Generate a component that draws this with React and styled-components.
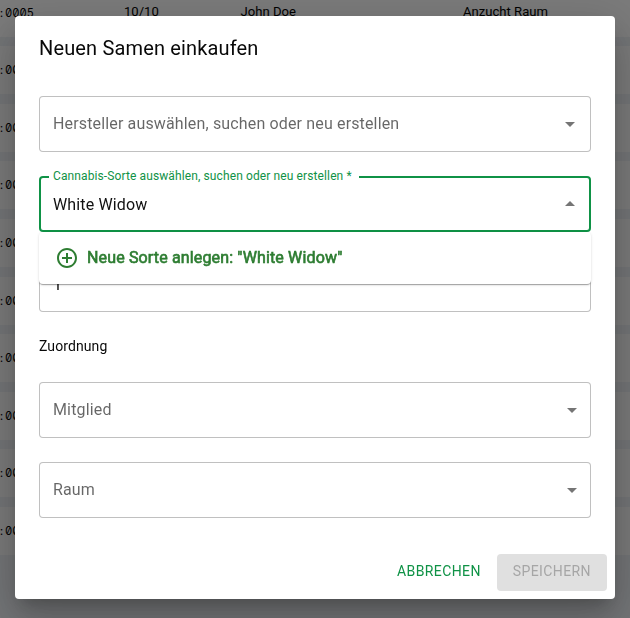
import React from "react";
import styled, { createGlobalStyle } from "styled-components";

const GlobalStyle = createGlobalStyle`
  * { box-sizing: border-box; }
  html, body { margin: 0; height: 100%; overflow: hidden; }
  body {
    background: #e8ebef;
    color: rgba(0, 0, 0, 0.87);
    font-family: Roboto, "Liberation Sans", sans-serif;
    font-size: 14px;
  }
`;

const Page = styled.div`
  height: 618px;
  overflow: hidden;
`;

const SeedList = styled.div`
  display: flex;
  flex-direction: column;
  gap: 9.6px;
  margin-top: -11.4px;
`;

const SeedRow = styled.div`
  display: grid;
  grid-template-columns: 124px 116.5px 222.5px 1fr;
  align-items: center;
  height: 48px;
  flex: none;
  padding-bottom: 2px;
  background: #f6f6f6;
  font-size: 13.1px;
  line-height: 20px;
  color: #000;
`;

const SeedCode = styled.span`
  margin-left: -2px;
  padding-top: 2px;
  font-family: Inter, "Liberation Mono", monospace;
  font-size: 11.2px;
  font-feature-settings: "tnum", "zero";
`;

const CodeColon = styled.span`
  display: inline-block;
  width: 7px;
  text-align: center;
`;

const Backdrop = styled.div`
  position: fixed;
  inset: 0;
  display: flex;
  justify-content: center;
  align-items: flex-start;
  padding-top: 16px;
  background: rgba(0, 0, 0, 0.5);
`;

const Dialog = styled.div`
  display: flex;
  flex-direction: column;
  width: 600px;
  height: 583px;
  border-radius: 4px;
  background: #fff;
  box-shadow: 0 11px 15px -7px rgba(0, 0, 0, 0.2),
    0 24px 38px 3px rgba(0, 0, 0, 0.14), 0 9px 46px 8px rgba(0, 0, 0, 0.12);
`;

const DialogTitle = styled.h2`
  margin: 0;
  padding: 16px 24px;
  color: #080808;
  font-size: 20px;
  font-weight: 400;
  line-height: 32px;
  letter-spacing: 0.0075em;
`;

const DialogContent = styled.div`
  display: flex;
  flex-direction: column;
  gap: 24px;
  flex: 1;
  padding: 16px 24px 0;
`;

const Field = styled.div`
  position: relative;
  display: flex;
  align-items: center;
  justify-content: space-between;
  height: 56px;
  flex: none;
  padding: 0 ${(p) => p.$endSpace || 6}px 1px 14px;
  border-radius: 4px;
  box-shadow: inset 0 0 0 ${(p) => (p.$active ? "2px #0f9246" : "1px #c0c0c0")};
  color: ${(p) => (p.$filled ? "#111" : "rgba(0, 0, 0, 0.6)")};
  font-size: 16px;
  line-height: 23px;
  letter-spacing: 0.00938em;
`;

const FieldValue = styled.span`
  padding-top: 2px;
`;

const FloatingLabel = styled.label`
  position: absolute;
  top: -8px;
  left: 10px;
  width: 310px;
  padding-left: 4px;
  background: #fff;
  color: #0f9246;
  font-size: 12px;
  line-height: 16px;
  letter-spacing: 0.00938em;
  white-space: nowrap;
`;

const ArrowIcon = styled.svg`
  width: 24px;
  height: 24px;
  flex: none;
  fill: rgba(0, 0, 0, 0.54);
  transform: ${(p) => (p.$open ? "rotate(180deg)" : "none")};
`;

const OptionMenu = styled.div`
  position: absolute;
  z-index: 1;
  top: 56px;
  left: 0;
  width: 552px;
  padding: 8px 0;
  border-radius: 4px;
  background: #fff;
  box-shadow: 0 2px 1px -1px rgba(0, 0, 0, 0.2),
    0 1px 1px rgba(0, 0, 0, 0.14), 0 1px 3px rgba(0, 0, 0, 0.12);
`;

const Option = styled.div`
  display: flex;
  align-items: center;
  gap: 8px;
  height: 36px;
  padding: 0 16px;
  color: #2e7d32;
  letter-spacing: 0.00938em;
  -webkit-text-stroke: 0.65px #2e7d32;
`;

const OptionText = styled.span`
  padding-bottom: 2px;
`;

const AddIcon = styled.svg`
  width: 24px;
  height: 24px;
  fill: #2e7d32;
`;

const SectionLabel = styled.div`
  height: 22px;
  color: #080808;
  font-size: 14px;
  line-height: 21px;
  letter-spacing: 0.00714em;
`;

const DialogActions = styled.div`
  display: flex;
  justify-content: flex-end;
  gap: 8px;
  padding: 8px;
`;

const Button = styled.button`
  height: 37px;
  padding: 0 ${(p) => (p.$contained ? 16 : 8)}px 3px;
  border: 0;
  border-radius: 4px;
  background: ${(p) => (p.$contained ? "#e0e0e0" : "transparent")};
  color: ${(p) => (p.$contained ? "#a6a6a6" : "#0f9246")};
  font: 400 14px/24px Roboto, "Liberation Sans", sans-serif;
  letter-spacing: 0.02857em;
  text-transform: uppercase;
`;

function Arrow({ open }) {
  return (
    <ArrowIcon viewBox="0 0 24 24" $open={open}>
      <path d="M7 10l5 5 5-5z" />
    </ArrowIcon>
  );
}

const seeds = [5, 6, 7, 8, 9, 10, 11, 12, 13, 14].map((n) =>
  String(n).padStart(4, "0")
);

export default function App() {
  return (
    <Page>
      <GlobalStyle />
      <SeedList>
        {seeds.map((code) => (
          <SeedRow key={code}>
            <SeedCode>
              <CodeColon>:</CodeColon>
              {code}
            </SeedCode>
            <span>10/10</span>
            <span>John Doe</span>
            <span>Anzucht Raum</span>
          </SeedRow>
        ))}
      </SeedList>
      <Backdrop>
        <Dialog role="dialog">
          <DialogTitle>Neuen Samen einkaufen</DialogTitle>
          <DialogContent>
            <Field $endSpace={9}>
              <span>Hersteller auswählen, suchen oder neu erstellen</span>
              <Arrow />
            </Field>
            <Field $active $filled $endSpace={9}>
              <FloatingLabel>
                Cannabis-Sorte auswählen, suchen oder neu erstellen *
              </FloatingLabel>
              <FieldValue>White Widow</FieldValue>
              <Arrow open />
              <OptionMenu>
                <Option>
                  <AddIcon viewBox="0 0 24 24" stroke="none">
                    <path d="M13 7h-2v4H7v2h4v4h2v-4h4v-2h-4V7zm-1-5C6.48 2 2 6.48 2 12s4.480 10 10 10 10-4.480 10-10S17.520 2 12 2zm0 18c-4.410 0-8-3.590-8-8s3.590-8 8-8 8 3.590 8 8-3.590 8-8 8z" />
                  </AddIcon>
                  <OptionText>Neue Sorte anlegen: "White Widow"</OptionText>
                </Option>
              </OptionMenu>
            </Field>
            <Field $filled>
              <FieldValue>1</FieldValue>
            </Field>
            <SectionLabel>Zuordnung</SectionLabel>
            <Field $endSpace={7}>
              <span>Mitglied</span>
              <Arrow />
            </Field>
            <Field $endSpace={7}>
              <span>Raum</span>
              <Arrow />
            </Field>
          </DialogContent>
          <DialogActions>
            <Button>Abbrechen</Button>
            <Button $contained disabled>
              Speichern
            </Button>
          </DialogActions>
        </Dialog>
      </Backdrop>
    </Page>
  );
}
